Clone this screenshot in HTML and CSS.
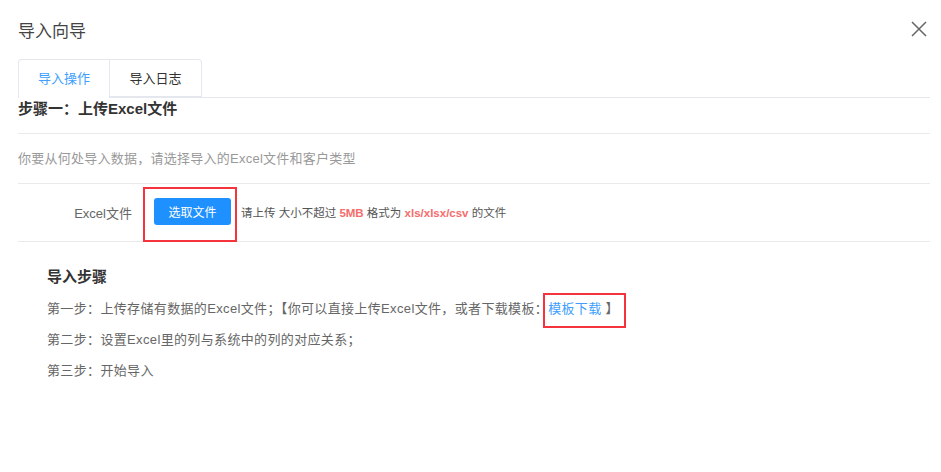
FILE: index.html
```html
<!DOCTYPE html>
<html lang="zh-CN">
<head>
    <meta charset="UTF-8">
    <meta name="viewport" content="width=device-width, initial-scale=1.0">
    <title>导入向导</title>
    <link rel="stylesheet" href="styles.css">
</head>
<body>
    <div class="modal">
        <div class="modal-header">
            <h2 class="modal-title">导入向导</h2>
            <button class="close-btn" aria-label="关闭">
                <svg width="16" height="16" viewBox="0 0 16 16"><path d="M1 1L15 15M15 1L1 15" stroke="#666" stroke-width="1.5" fill="none"/></svg>
            </button>
        </div>

        <div class="tabs">
            <div class="tab active">导入操作</div>
            <div class="tab">导入日志</div>
        </div>

        <div class="step-title">步骤一：上传Excel文件</div>
        <div class="step-desc">你要从何处导入数据，请选择导入的Excel文件和客户类型</div>

        <div class="upload-row">
            <label class="upload-label">Excel文件</label>
            <span class="marked">
                <button class="btn btn-primary">选取文件</button>
                <span class="mark mark-btn"></span>
            </span>
            <span class="upload-tip">请上传 大小不超过 <b class="hl">5MB</b> 格式为 <b class="hl">xls/xlsx/csv</b> 的文件</span>
        </div>

        <div class="guide">
            <h3 class="guide-title">导入步骤</h3>
            <p>第一步：上传存储有数据的Excel文件；【你可以直接上传Excel文件，或者下载模板：<span class="marked marked-inline"><a href="#" class="link">模板下载</a> 】<span class="mark mark-link"></span></span></p>
            <p>第二步：设置Excel里的列与系统中的列的对应关系；</p>
            <p>第三步：开始导入</p>
        </div>
    </div>
</body>
</html>
```

FILE: styles.css
```css
* { box-sizing: border-box; margin: 0; padding: 0; }
body { font-family: "Liberation Sans", "Noto Sans CJK SC", sans-serif; background: #fff; color: #666; }
.modal { padding: 0 11px 0 18px; }
.modal-header {
    height: 59px;
    display: flex;
    align-items: center;
    justify-content: space-between;
    padding-bottom: 1px;
}
.modal-title { font-size: 17px; font-weight: normal; color: #444; }
.close-btn {
    border: none;
    background: none;
    width: 16px;
    height: 16px;
    margin-right: 3px;
    cursor: pointer;
}
.close-btn svg { display: block; }
.tabs {
    display: flex;
    border-bottom: 1px solid #e4e7ed;
}
.tab {
    width: 92px;
    height: 38px;
    line-height: 37px;
    text-align: center;
    font-size: 13px;
    color: #333;
    border: 1px solid #e4e7ed;
    border-bottom: none;
    margin-bottom: -1px;
    background: #fff;
}
.tab + .tab { border-left: none; border-top-right-radius: 4px; }
.tab:first-child { border-top-left-radius: 4px; height: 39px; }
.tab.active { color: #409eff; }
.tab.active + .tab { height: 38px; border-bottom: 1px solid #e4e7ed; margin-bottom: -1px; }
.step-title {
    font-size: 15px;
    font-weight: bold;
    color: #333;
    height: 36px;
    line-height: 22px;
    border-bottom: 1px solid #e8eaec;
}
.step-desc {
    font-size: 13px;
    letter-spacing: 0.25px;
    color: #999;
    height: 50px;
    line-height: 50px;
    border-bottom: 1px solid #e8eaec;
}
.upload-row {
    height: 58px;
    display: flex;
    align-items: center;
    border-bottom: 1px solid #e8eaec;
    font-size: 12px;
    padding-bottom: 2px;
}
.upload-label {
    width: 114px;
    text-align: right;
    font-size: 13px;
    color: #666;
    margin-right: 22px;
    margin-top: 2px;
}
.marked { position: relative; display: inline-block; }
.marked-inline { vertical-align: top; line-height: inherit; }
.mark {
    position: absolute;
    border: 2px solid #f4333c;
    pointer-events: none;
}
.mark-btn { top: -11px; left: -11px; right: -6px; bottom: -17px; }
.mark-link { top: 0; left: -5px; right: -7px; bottom: -4px; }
.btn {
    width: 77px;
    height: 27px;
    border: none;
    border-radius: 3px;
    cursor: pointer;
    font-family: inherit;
    font-size: 12px;
    display: block;
}
.btn-primary { background: #1e90ff; color: #fff; }
.upload-tip { margin-left: 10px; color: #555; font-size: 11.5px; }
.hl { color: #f56c6c; }
.guide { padding: 24px 0 0 29px; }
.guide-title { font-size: 15px; font-weight: bold; color: #333; line-height: 22px; margin-bottom: 5px; }
.guide p { font-size: 13px; letter-spacing: 0.35px; line-height: 31px; height: 31px; color: #666; }
.link { color: #409eff; text-decoration: none; }
```
